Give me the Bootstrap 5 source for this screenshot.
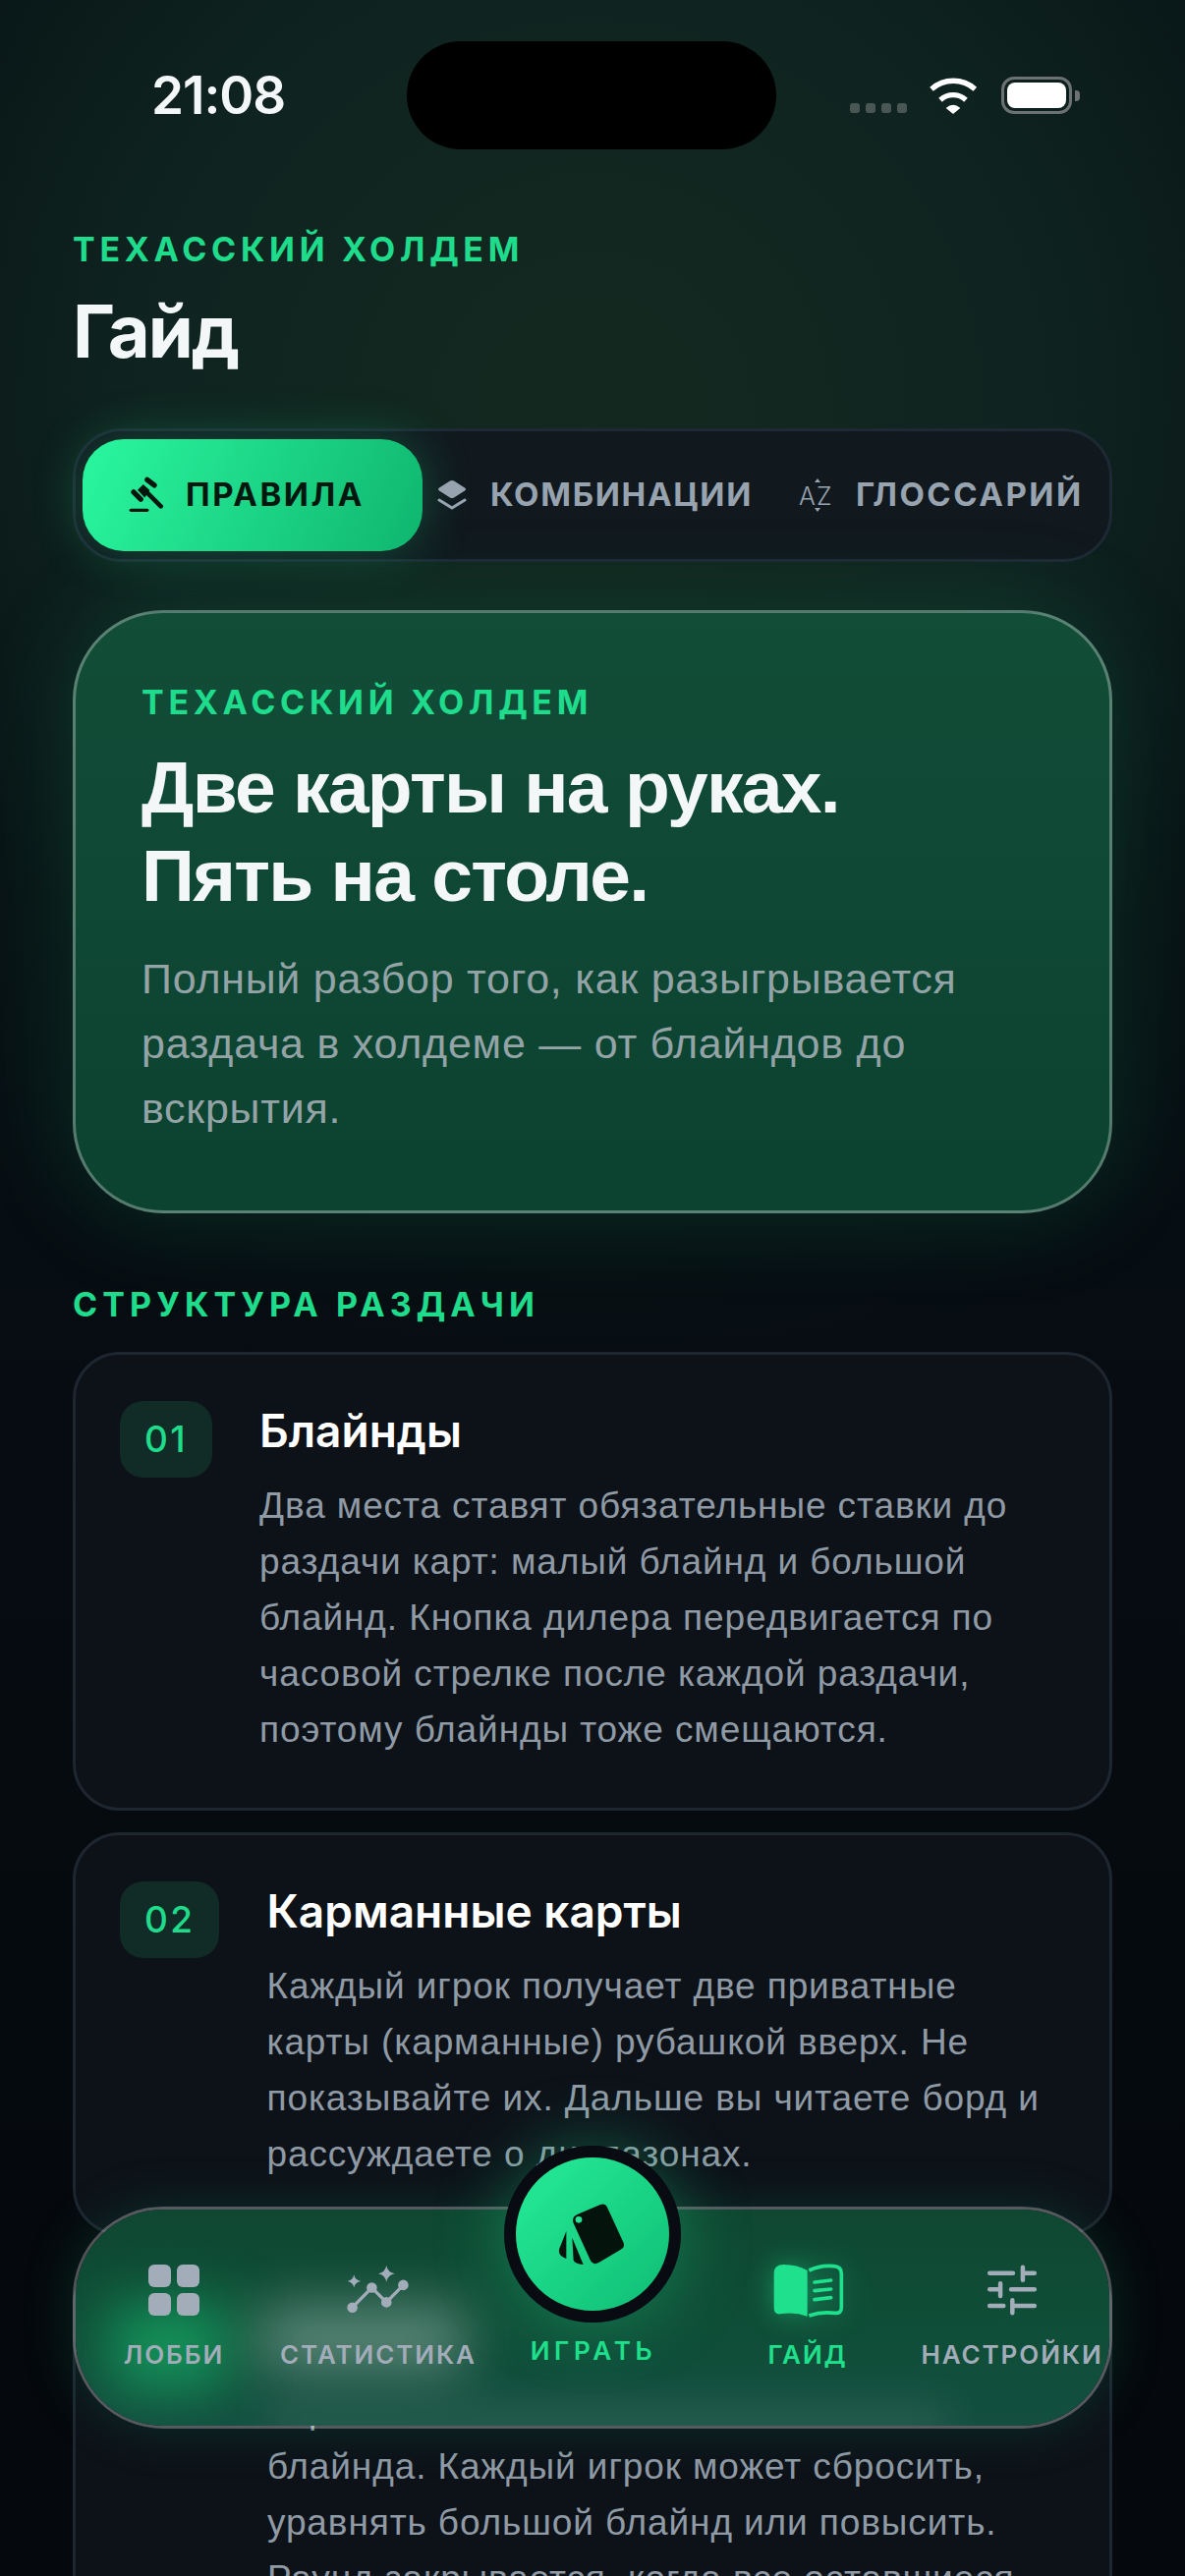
<!DOCTYPE html>
<html lang="ru">
<head>
  <meta charset="UTF-8" />
  <title>Гайд</title>
  <link href="https://cdn.jsdelivr.net/npm/bootstrap@5.3.0/dist/css/bootstrap.min.css" rel="stylesheet" />
  <style>
    html, body { height: 2622px; overflow: hidden; }
    body {
      font-family: "Inter", "Noto Sans", sans-serif;
      color: #f4f7f8;
      background:
        radial-gradient(ellipse 1000px 1000px at 50% 420px, #13291f 0%, #0f2420 45%, rgba(9,22,22,.6) 75%, rgba(6,12,16,0) 100%),
        linear-gradient(180deg, #0a1a1a 0%, #060c11 55%, #05080c 100%);
    }
    .phone { position: relative; height: 2622px; overflow: hidden; }
    .status-row { height: 152px; padding-top: 42px; padding-left: 155px; }
    .clock { width: 259px; height: 110px; font-size: 53px; font-weight: 600; line-height: 110px; margin-left: -1px; margin-right: 1px; letter-spacing: -1px; }
    .island { width: 376px; height: 110px; border-radius: 55px; background: #000; }
    .status-icons { margin-left: 75px; height: 110px; }
    .dot { width: 10px; height: 10px; border-radius: 3px; background: #4a5654; }
    .dots { gap: 6px; margin-top: 25px; margin-right: 22px; }
    .battery { position: relative; width: 72px; height: 38px; border: 3px solid #6b7271; border-radius: 13px; padding: 3px; margin-left: 24px; margin-right: 9px; }
    .battery i { display: block; height: 100%; background: #fff; border-radius: 8px; }
    .battery::after { content: ""; position: absolute; right: -11px; top: 11px; width: 5px; height: 11px; border-radius: 0 4px 4px 0; background: #6b7271; }
    .main-col { padding: 0 74px; }
    .eyebrow { font-size: 34px; line-height: 42px; font-weight: 700; letter-spacing: 4.7px; color: #1fdc8c; }
    .page-title { font-size: 74px; font-weight: 700; line-height: 90px; letter-spacing: -2px; margin: 17px 0 0; }
    .tabbar { height: 136px; margin-top: 54px; padding: 7px; border: 3px solid #1d2a35; border-radius: 50px; background: #11191e; }
    .tab-item { font-size: 33px; font-weight: 700; letter-spacing: 2.5px; color: #98a3b0; white-space: nowrap; }
    .tab-on { flex: none; width: 346px; height: 114px; padding-left: 46px; gap: 21px; border-radius: 42px; color: #04170f; background: linear-gradient(115deg, #2af7a0 0%, #0fb56e 100%); box-shadow: 0 0 50px rgba(31,220,140,.28); }
    .tab-a { margin-left: 15px; gap: 24px; letter-spacing: 1.7px; }
    .tab-b { margin-left: 47px; gap: 22px; }
    .hero-card { height: 614px; margin-top: 49px; padding: 70px 67px 0; border: 3px solid rgba(255,255,255,.3); border-radius: 92px; background: linear-gradient(180deg, #124d38 0%, #0b4230 100%); box-shadow: 0 0 90px rgba(18,120,80,.28); }
    .hero-title { font-family: "Liberation Sans", sans-serif; font-size: 75px; font-weight: 700; line-height: 90px; letter-spacing: -1.75px; margin: 20px 0 0; }
    .hero-text { font-family: "Liberation Sans", sans-serif; font-size: 43px; line-height: 66px; letter-spacing: .75px; color: #93a3a6; margin: 27px 0 0; }
    .section-label { margin: 72px 0 0; letter-spacing: 5.1px; }
    .step-box { padding: 47px 45px 0; border: 3px solid #1e2630; border-radius: 48px; background: #0d1219; margin-top: 22px; }
    .section-label + .step-box { margin-top: 27px; }
    .step-num { flex: none; height: 78px; padding: 0 25px; margin-right: 48px; border-radius: 24px; background: #112c26; color: #1fdc8c; font-size: 37px; font-weight: 500; line-height: 78px; letter-spacing: 2.4px; }
    .step-title { font-size: 46px; font-weight: 600; line-height: 56px; margin: 2px 0 0; color: #fff; }
    .step-text { font-family: "Liberation Sans", sans-serif; font-size: 37px; line-height: 57px; letter-spacing: .9px; color: #8f9aa5; margin: 20px 0 51px; }
    .bottom-nav {
      position: absolute; left: 74px; top: 2246px; width: 1058px; height: 226px;
      display: grid; grid-template-columns: 200px 216px 220px 218px 198px;
      border: 3px solid rgba(255,255,255,.3); border-radius: 92px;
      box-shadow: 0 0 50px rgba(16,120,80,.28);
    }
    .nav-fill { position: absolute; inset: 0; overflow: hidden; border-radius: 89px; background: linear-gradient(180deg, #0f4732 0%, #0f4e38 55%, #134e3f 100%); }
    .nav-fill span { position: absolute; display: block; }
    .glow-badge { left: 35px; top: 95px; width: 120px; height: 90px; background: rgba(24,190,110,.6); filter: blur(28px); }
    .glow-title { left: 188px; top: 100px; width: 208px; height: 62px; background: rgba(255,255,255,.34); filter: blur(28px); }
    .glow-line { left: 190px; top: 196px; width: 700px; height: 50px; background: rgba(255,255,255,.08); filter: blur(22px); }
    .nav-cell { position: relative; display: flex; flex-direction: column; align-items: center; padding-top: 52px; white-space: nowrap; color: #a3acb9; font-size: 26px; font-weight: 600; letter-spacing: 1.9px; }
    .nav-ico { height: 60px; display: flex; align-items: center; justify-content: center; margin-bottom: 16px; }
    .nav-on { color: #1fe08c; }
    .nav-on svg { filter: drop-shadow(0 0 14px rgba(31,224,140,.45)); }
    .play-label { padding-top: 124px; padding-left: 2px; letter-spacing: 4.7px; }
    .play-btn {
      position: absolute; left: 436px; top: -65px; width: 180px; height: 180px;
      border: 12px solid #080c12; border-radius: 50%;
      display: flex; align-items: center; justify-content: center;
      background: linear-gradient(135deg, #25ec98 0%, #0fbd74 100%);
      box-shadow: 0 0 70px rgba(31,224,140,.35);
    }
  </style>
</head>
<body>
  <div class="phone">
    <div class="status-row d-flex">
      <div class="clock">21:08</div>
      <div class="island"></div>
      <div class="status-icons d-flex align-items-center">
        <div class="dots d-flex"><span class="dot"></span><span class="dot"></span><span class="dot"></span><span class="dot"></span></div>
        <svg width="50" height="38" viewBox="316 84 150 114"><path d="M325 122A100 100 0 0 1 458 122" fill="none" stroke="#fff" stroke-width="16"/><path d="M352 155A58 58 0 0 1 430 155" fill="none" stroke="#fff" stroke-width="16"/><path d="M369 180Q391 160 413 180L391 198Z" fill="#fff"/></svg>
        <div class="battery"><i></i></div>
      </div>
    </div>

    <div class="main-col">
      <div class="eyebrow" style="margin-top:81px">ТЕХАССКИЙ ХОЛДЕМ</div>
      <h1 class="page-title">Гайд</h1>

      <div class="tabbar d-flex align-items-center">
        <div class="tab-item tab-on d-flex align-items-center">
          <svg width="38" height="38" viewBox="210 170 115 115" fill="#04170f" stroke="#04170f" stroke-linecap="round">
            <path d="M270 180L292 197M228 218L250 240" stroke-width="16"/>
            <path d="M258 197L275 213L262 232L243 212Z" stroke-width="4"/>
            <path d="M262 212L312 262" stroke-width="14"/>
            <path d="M220 274H270" stroke-width="10"/>
          </svg>
          <span>ПРАВИЛА</span>
        </div>
        <div class="tab-item tab-a d-flex align-items-center">
          <svg width="30" height="32" viewBox="0 0 30 32"><path d="M13 1.5Q15 .5 17 1.5L28 8.5Q30 10 28 11.5L17 18.5Q15 19.5 13 18.5L2 11.5Q0 10 2 8.5Z" fill="#98a3b0"/><path d="M2 21L15 29L28 21" fill="none" stroke="#98a3b0" stroke-width="3" stroke-linecap="round"/></svg>
          <span>КОМБИНАЦИИ</span>
        </div>
        <div class="tab-item tab-b d-flex align-items-center">
          <svg width="36" height="36" viewBox="0 0 36 36"><text x="0" y="28" font-family="Inter" font-size="25" font-weight="300" fill="#98a3b0">A</text><text x="18" y="28" font-family="Inter" font-size="25" font-weight="300" fill="#98a3b0">Z</text><path d="M16 5L19 1L22 5ZM16 31L22 31L19 35Z" fill="#98a3b0"/></svg>
          <span>ГЛОССАРИЙ</span>
        </div>
      </div>

      <div class="hero-card">
        <div class="eyebrow">ТЕХАССКИЙ ХОЛДЕМ</div>
        <h2 class="hero-title">Две карты на руках.<br>Пять на столе.</h2>
        <p class="hero-text">Полный разбор того, как разыгрывается раздача в холдеме — от блайндов до вскрытия.</p>
      </div>

      <div class="eyebrow section-label">СТРУКТУРА РАЗДАЧИ</div>

      <div class="step-box d-flex align-items-start">
        <div class="step-num">01</div>
        <div>
          <h3 class="step-title">Блайнды</h3>
          <p class="step-text">Два места ставят обязательные ставки до раздачи карт: малый блайнд и большой блайнд. Кнопка дилера передвигается по часовой стрелке после каждой раздачи, поэтому блайнды тоже смещаются.</p>
        </div>
      </div>

      <div class="step-box d-flex align-items-start">
        <div class="step-num">02</div>
        <div>
          <h3 class="step-title">Карманные карты</h3>
          <p class="step-text">Каждый игрок получает две приватные карты (карманные) рубашкой вверх. Не показывайте их. Дальше вы читаете борд и рассуждаете о диапазонах.</p>
        </div>
      </div>

      <div class="step-box d-flex align-items-start">
        <div class="step-num">03</div>
        <div>
          <h3 class="step-title">Префлоп</h3>
          <p class="step-text">Торговля начинается слева от большого блайнда. Каждый игрок может сбросить, уравнять большой блайнд или повысить. Раунд закрывается, когда все оставшиеся игроки уравняли ставку.</p>
        </div>
      </div>
    </div>

    <div class="bottom-nav">
      <div class="nav-fill"><span class="glow-badge"></span><span class="glow-title"></span><span class="glow-line"></span></div>
      <div class="nav-cell">
        <div class="nav-ico"><svg width="52" height="52" viewBox="0 0 52 52" fill="#a3acb9"><rect width="23" height="23" rx="6"/><rect x="29" width="23" height="23" rx="6"/><rect y="29" width="23" height="23" rx="6"/><rect x="29" y="29" width="23" height="23" rx="6"/></svg></div>
        <span>ЛОББИ</span>
      </div>
      <div class="nav-cell">
        <div class="nav-ico"><svg width="66" height="52" viewBox="755 195 200 155" fill="#a3acb9"><path d="M775 326L835 265L880 310L932 257" fill="none" stroke="#a3acb9" stroke-width="10"/><circle cx="775" cy="326" r="16"/><circle cx="835" cy="265" r="16"/><circle cx="880" cy="310" r="16"/><circle cx="932" cy="257" r="16"/><path d="M880 197Q884 218 906 222Q884 226 880 248Q876 226 855 222Q876 218 880 197Z"/><path d="M780 225Q783 242 801 245Q783 248 780 265Q777 248 760 245Q777 242 780 225Z"/></svg></div>
        <span>СТАТИСТИКА</span>
      </div>
      <div class="nav-cell nav-on play-label">
        <span>ИГРАТЬ</span>
      </div>
      <div class="nav-cell nav-on">
        <div class="nav-ico"><svg width="75" height="60" viewBox="70 100 225 180"><path d="M78 138Q78 112 108 112Q150 112 180 130V270Q140 255 98 263Q78 265 78 245Z" fill="#1fe08c"/><path d="M185 130Q222 112 262 117Q284 119 284 140V243Q284 262 264 260Q222 255 185 268" fill="none" stroke="#1fe08c" stroke-width="11"/><path d="M202 166L252 160M202 192L252 187M202 219L252 213" stroke="#1fe08c" stroke-width="11" stroke-linecap="round"/></svg></div>
        <span>ГАЙД</span>
      </div>
      <div class="nav-cell">
        <div class="nav-ico"><svg width="54" height="54" viewBox="725 105 168 162" stroke="#a3acb9" stroke-width="14" stroke-linecap="round" fill="none"><path d="M738 132H812M843 114V154M843 132H880M738 184H770M772 165V205M806 184H880M738 236H782M810 218V258M810 236H880"/></svg></div>
        <span>НАСТРОЙКИ</span>
      </div>
      <div class="play-btn">
        <svg width="80" height="70" viewBox="250 210 240 210" fill="#04140c"><path d="M325 254L392 226Q408 219 415 233L464 340Q471 356 455 363L389 402Q372 411 364 396L312 282Q305 262 325 254Z"/><circle cx="328" cy="271" r="10" fill="#25e593"/><path d="M290 306L272 352Q258 378 290 390Z"/><path d="M308 326L342 408Q316 405 312 395Z"/></svg>
      </div>
    </div>
  </div>
  <script src="https://cdn.jsdelivr.net/npm/bootstrap@5.3.0/dist/js/bootstrap.bundle.min.js"></script>
</body>
</html>
